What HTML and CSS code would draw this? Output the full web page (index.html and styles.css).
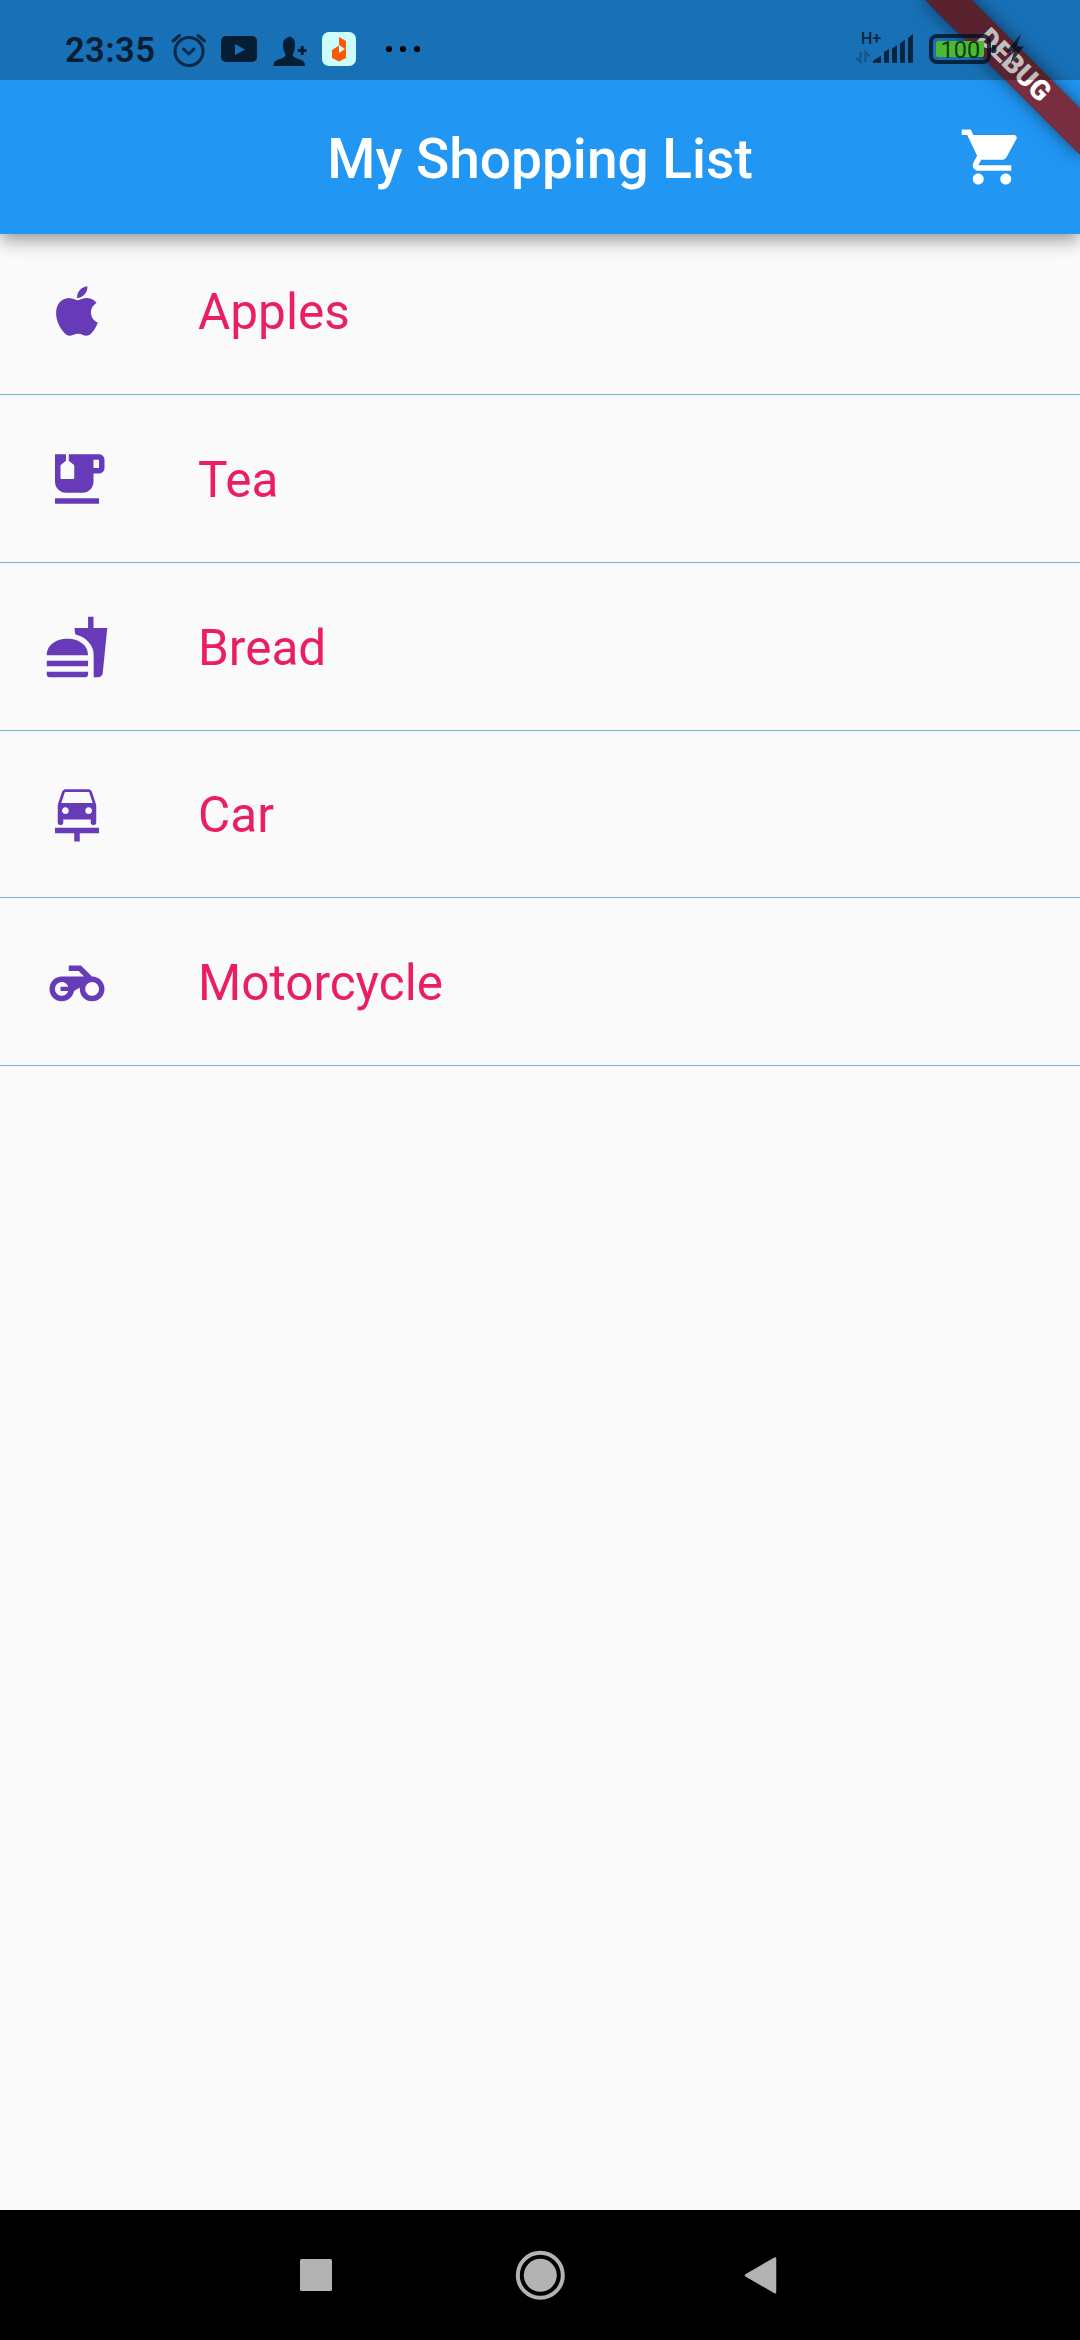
FILE: index.html
```html
<!DOCTYPE html>
<html lang="en">
<head>
<meta charset="utf-8">
<title>My Shopping List</title>
<link rel="stylesheet" href="styles.css">
</head>
<body>
<div class="screen">
  <header class="app-bar">
    <h1 class="title">My Shopping List</h1>
    <svg class="icon cart" viewBox="0 0 24 24"><path d="M7 18c-1.1 0-1.99.9-1.99 2S5.9 22 7 22s2-.9 2-2-.9-2-2-2zM1 2v2h2l3.6 7.59-1.35 2.45c-.16.28-.25.61-.25.96 0 1.1.9 2 2 2h12v-2H7.42c-.14 0-.25-.11-.25-.25l.03-.12.9-1.63h7.45c.75 0 1.41-.41 1.75-1.03l3.58-6.49c.08-.14.12-.31.12-.48 0-.55-.45-1-1-1H5.21l-.94-2H1zm16 16c-1.1 0-1.99.9-1.99 2s.89 2 1.99 2 2-.9 2-2-.9-2-2-2z"/></svg>
  </header>
  <main class="list">
    <div class="item">
      <svg class="icon" viewBox="0 0 24 24"><path d="M17.05 20.28c-.98.95-2.05.8-3.08.35-1.09-.46-2.09-.48-3.24 0-1.44.62-2.2.44-3.06-.35C2.79 15.25 3.51 7.59 9.05 7.31c1.35.07 2.29.74 3.08.8 1.18-.24 2.31-.93 3.57-.84 1.51.12 2.65.72 3.4 1.8-3.12 1.87-2.38 5.98.48 7.13-.57 1.5-1.31 2.99-2.54 4.09zM12.03 7.25c-.15-2.23 1.66-4.07 3.74-4.25.29 2.58-2.34 4.5-3.74 4.25z"/></svg>
      <span>Apples</span>
    </div>
    <hr class="divider">
    <div class="item">
      <svg class="icon" viewBox="0 0 24 24"><path d="M20 3H9v2.4l1.81 1.45c.12.09.19.24.19.39v4.26c0 .28-.22.5-.5.5h-4c-.28 0-.5-.22-.5-.5V7.24c0-.15.07-.3.19-.39L8 5.4V3H4v10c0 2.21 1.79 4 4 4h6c2.21 0 4-1.79 4-4v-3h2c1.11 0 2-.89 2-2V5c0-1.11-.89-2-2-2zm0 5h-2V5h2v3zM4 19h16v2H4z"/></svg>
      <span>Tea</span>
    </div>
    <hr class="divider">
    <div class="item">
      <svg class="icon" viewBox="0 0 24 24"><path d="M18.06 22.99h1.66c.84 0 1.53-.64 1.63-1.46L23 5.05h-5V1h-1.97v4.05h-4.97l.3 2.34c1.71.47 3.31 1.32 4.27 2.26 1.44 1.42 2.43 2.89 2.43 5.29v8.05zM1 21.99V21h15.03v.99c0 .55-.45 1-1.01 1H2.01c-.56 0-1.01-.45-1.01-1zm15.03-7c0-8-15.03-8-15.03 0h15.03zM1.02 17h15v2h-15z"/></svg>
      <span>Bread</span>
    </div>
    <hr class="divider">
    <div class="item">
      <svg class="icon" viewBox="0 0 24 24"><path fill-rule="evenodd" d="M16.22 12c.68 0 1.22-.54 1.22-1.22 0-.67-.54-1.22-1.22-1.22S15 10.11 15 10.78c0 .68.55 1.22 1.22 1.22zm-9.66-1.22c0 .67.54 1.22 1.22 1.22S9 11.46 9 10.78c0-.67-.54-1.22-1.22-1.22s-1.22.55-1.22 1.22zM7.61 4L6.28 8h11.43l-1.33-4H7.61zm8.67-1s.54.01.92.54c.02.02.03.04.05.07.07.11.14.24.19.4C17.66 4.66 19 8.69 19 8.69v6.5c0 .45-.35.81-.78.81h-.44c-.44 0-.78-.36-.78-.81V14H7v1.19c0 .45-.35.81-.78.81h-.44c-.43 0-.78-.36-.78-.81v-6.5C5.34 7.67 6.55 4.02 6.55 4.02c.05-.16.12-.28.19-.4.02-.04.04-.06.06-.08C7.18 3.01 7.72 3 7.72 3h8.56zM4 17.01h16V19h-7v3h-2v-3H4v-1.99z"/></svg>
      <span>Car</span>
    </div>
    <hr class="divider">
    <div class="item">
      <svg class="icon" viewBox="0 0 24 24"><path fill-rule="evenodd" d="M17.42 10l-3.99-4H9v2h3.6l2 2H6.5C4.01 10 2 12.01 2 14.5S4.01 19 6.5 19c2.22 0 4.06-1.62 4.43-3.74L13.04 14h.02c-.04.16-.06.33-.06.5 0 2.49 2.01 4.5 4.5 4.5s4.5-2.01 4.5-4.5-2.05-4.5-4.58-4.5zM6.5 17C5.12 17 4 15.88 4 14.5S5.12 12 6.5 12c1.05 0 1.96.64 2.33 1.75H6v1.5h2.83C8.46 16.36 7.55 17 6.5 17zm11 0c-1.38 0-2.5-1.12-2.5-2.5s1.12-2.5 2.5-2.5 2.5 1.12 2.5 2.5-1.12 2.5-2.5 2.5z"/></svg>
      <span>Motorcycle</span>
    </div>
    <hr class="divider">
  </main>
  <nav class="nav-bar">
    <svg viewBox="0 0 1080 130">
      <rect x="300" y="49" width="32" height="32" rx="1.5"/>
      <circle cx="540.3" cy="65.300" r="16.500"/>
      <circle class="ring" cx="540.3" cy="65.300" r="22.500"/>
      <path class="back" d="M746 65.300L775 48.500V82.200z"/>
    </svg>
  </nav>
  <div class="banner-clip"><div class="banner">DEBUG</div></div>
  <div class="status-bar">
    <span class="clock">23:35</span>
    <svg class="status-icons" viewBox="165 0 265 80">
      <g class="alarm"><circle cx="189" cy="51.500" r="14"/><path d="M183.500 49l5.300 5 5.200-5M173 41l6.500-5.500M204.500 41l-6.500-5.500"/></g>
      <rect x="221" y="36" width="36" height="26" rx="5"/>
      <path class="play" d="M235 44v11l10-5.500z"/>
      <path d="M273.500 66C273.500 61 276 60.500 280 59C284 57.500 285.500 56.500 285.500 54C283.800 51.500 283 48.500 283 44C283 39.500 286.500 37.500 290.500 36.500L292 38C294 38.500 295 40.500 295 44C295 48.500 294.500 51.500 292.800 54C292.800 56.500 294.500 57.500 298.500 59C302.500 60.500 305 61 305 66zM300.700 46v3h-3v3h3v3h3v-3h2.800v-3h-2.800v-3z"/>
      <rect class="app-tile" x="322" y="32" width="34" height="34" rx="7"/>
      <path class="app-mark" fill-rule="evenodd" d="M339 37l7 4v17l-7 3.500-7-3.500V50l7-4.500zM339 45v8l6-4z"/>
      <g class="dots"><circle cx="389" cy="49" r="3.100"/><circle cx="403" cy="49" r="3.100"/><circle cx="417" cy="49" r="3.100"/></g>
    </svg>
    <svg class="signal" viewBox="850 0 190 80">
      <text class="network" x="861" y="43.500">H+</text>
      <path class="arrows" d="M860.500 52v10l-4-4M865.500 62V52l4 4"/>
      <path d="M873 62.700v-2l8-5v7zM884 62.700V52l5-3v13.700zM892 62.700V48.500l5-3.500v17.700zM900 62.700V43.500l5-4v23.200zM908 62.700V38l5-4v28.700z"/>
      <rect class="cell" x="936" y="41" width="48" height="16" rx="2"/>
      <rect class="cell-frame" x="931" y="36" width="58" height="26" rx="6"/>
      <path d="M992 45h2.500q2 0 2 2v4q0 2-2 2H992z"/>
      <text class="level" x="940.500" y="58">100</text>
      <path d="M1021 34l-15 17.500h8l-3.500 12L1024 46.500h-7.500z"/>
    </svg>
  </div>
</div>
</body>
</html>
```
FILE: styles.css
```css
body {
  margin: 0;
  font-family: Roboto, sans-serif;
}

.screen {
  position: relative;
  display: flex;
  flex-direction: column;
  width: 1080px;
  height: 2340px;
  overflow: hidden;
  background: #fafafa;
}

.app-bar {
  position: relative;
  display: grid;
  grid-template-columns: 1fr auto 1fr;
  align-items: center;
  box-sizing: border-box;
  height: 234px;
  padding: 80px 55px 0;
  background: #2196f3;
  box-shadow: 0 5.5px 11px -2.75px rgba(0, 0, 0, .2), 0 11px 13.75px rgba(0, 0, 0, .14), 0 2.75px 27.5px rgba(0, 0, 0, .12);
}

.title {
  grid-column: 2;
  margin: 0;
  padding-top: 4px;
  color: #fff;
  font-size: 55px;
  font-weight: 500;
  line-height: 64px;
}

.icon {
  flex: none;
  width: 66px;
  height: 66px;
  fill: #673ab7;
}

.cart {
  justify-self: end;
  fill: #fff;
}

.list {
  flex: 1;
}

.item {
  display: flex;
  align-items: center;
  gap: 88px;
  height: 154px;
  padding-left: 44px;
  color: #e91e63;
  font-size: 49.5px;
}

.item span {
  padding-top: 2px;
}

.divider {
  box-sizing: border-box;
  height: 13.75px;
  margin: 0;
  padding-top: 6px;
  border: 0;
}

.divider::before {
  content: "";
  display: block;
  height: 1px;
  background: #76b5d8;
}

.nav-bar {
  height: 130px;
  background: #000;
}

.nav-bar svg {
  display: block;
  width: 1080px;
  height: 130px;
  fill: #b3b3b3;
}

.ring {
  fill: none;
  stroke: #b3b3b3;
  stroke-width: 4;
}

.back {
  stroke: #b3b3b3;
  stroke-width: 2.5;
  stroke-linejoin: round;
}

.banner-clip {
  position: absolute;
  top: 0;
  right: 0;
  width: 240px;
  height: 240px;
  overflow: hidden;
}

.banner {
  position: absolute;
  top: 49.25px;
  left: 64.25px;
  width: 220px;
  height: 33px;
  transform: rotate(45deg);
  background: linear-gradient(rgba(183, 28, 28, .627), rgba(183, 28, 28, .627)), rgba(0, 0, 0, .5);
  box-shadow: 0 0 16.5px rgba(0, 0, 0, .5);
  color: #fff;
  font-size: 28px;
  font-weight: 900;
  line-height: 32px;
  text-align: center;
}

.status-bar {
  position: absolute;
  inset: 0 0 auto;
  display: flex;
  box-sizing: border-box;
  height: 80px;
  padding: 0 40px 0 65px;
  background: rgba(0, 0, 0, .25);
}

.clock {
  box-sizing: border-box;
  width: 100px;
  height: 80px;
  padding-top: 10px;
  color: #051e33;
  font-size: 34.5px;
  font-weight: 600;
  line-height: 80px;
  letter-spacing: 0.4px;
}

.status-icons {
  width: 265px;
  height: 80px;
  fill: #051e33;
}

.alarm {
  fill: none;
  stroke: #082947;
  stroke-width: 3;
  stroke-linecap: round;
  stroke-linejoin: round;
}

.play {
  fill: #1a70b6;
}

.app-tile {
  fill: #ccfdfb;
}

.app-mark {
  fill: #fc5705;
}

.dots {
  fill: #000;
}

.signal {
  width: 190px;
  height: 80px;
  margin-left: auto;
  fill: rgba(0, 18, 35, .8);
}

.network {
  font-size: 16px;
  font-weight: 500;
}

.arrows {
  fill: none;
  stroke: #155488;
  stroke-width: 2;
}

.cell {
  fill: #4cba30;
}

.cell-frame {
  fill: none;
  stroke: rgba(0, 18, 35, .8);
  stroke-width: 4;
}

.level {
  fill: #0b3a12;
  font-size: 23.5px;
}
```
